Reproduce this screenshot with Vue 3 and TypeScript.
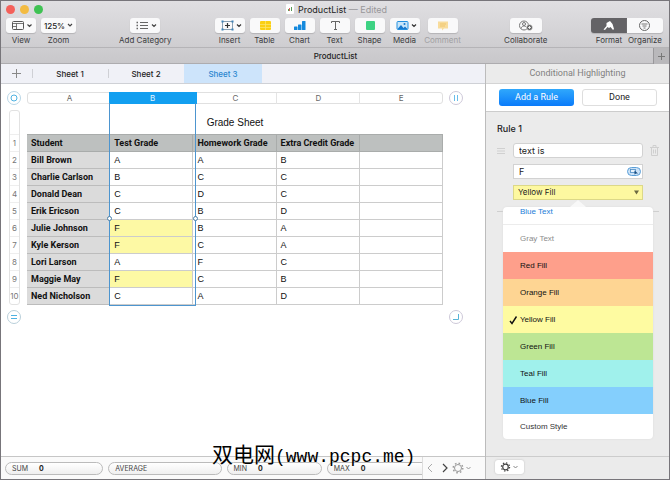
<script setup lang="ts">
import { ref } from 'vue'

interface Fill { name: string; tone: string }

const columns: string[] = ['A', 'B', 'C', 'D', 'E']
const headings: string[] = ['Student', 'Test Grade', 'Homework Grade', 'Extra Credit Grade', '']
const students: string[][] = [
  ['Bill Brown', 'A', 'A', 'B', ''],
  ['Charlie Carlson', 'B', 'C', 'C', ''],
  ['Donald Dean', 'C', 'D', 'C', ''],
  ['Erik Ericson', 'C', 'B', 'D', ''],
  ['Julie Johnson', 'F', 'B', 'A', ''],
  ['Kyle Kerson', 'F', 'C', 'A', ''],
  ['Lori Larson', 'A', 'F', 'C', ''],
  ['Maggie May', 'F', 'C', 'B', ''],
  ['Ned Nicholson', 'C', 'A', 'D', ''],
]
const sheets: string[] = ['Sheet 1', 'Sheet 2', 'Sheet 3']
const activeSheet = ref('Sheet 3')
const fills: Fill[] = [
  { name: 'Blue Text', tone: 'blue-text' },
  { name: 'Gray Text', tone: 'gray-text' },
  { name: 'Red Fill', tone: 'red' },
  { name: 'Orange Fill', tone: 'orange' },
  { name: 'Yellow Fill', tone: 'yellow' },
  { name: 'Green Fill', tone: 'green' },
  { name: 'Teal Fill', tone: 'teal' },
  { name: 'Blue Fill', tone: 'blue' },
  { name: 'Custom Style', tone: 'custom' },
]
const chosen = ref('Yellow Fill')
const condition = ref('text is')
const match = ref('F')
</script>

<template>
  <div class="window">
    <header class="top">
      <div class="title-row">
        <div class="lights">
          <button class="light close" aria-label="Close"></button>
          <button class="light mini" aria-label="Minimize"></button>
          <button class="light full" aria-label="Full screen"></button>
        </div>
        <h1 class="title">
          <svg width="8" height="10" viewBox="0 0 8 10"><rect width="8" height="10" rx="1" fill="#fff" /><rect x="2" y="5" width="1" height="2" fill="#5a5" /><rect x="3" y="4" width="1" height="3" fill="#d66" /><rect x="5" y="3" width="1" height="4" fill="#595" /></svg>
          <span>ProductList <span class="edited">— Edited</span></span>
        </h1>
      </div>

      <nav class="toolbar">
        <div class="group first">
          <button class="tool">
            <span class="face">
              <svg width="30" height="15" viewBox="0 0 30 15" fill="none" stroke="#555"><rect x="6.500" y="3.500" width="11" height="8" rx="1" /><path d="M6.500 5.500h11M10.500 5.500v6M6.500 8.500h4" stroke-width=".8" /><path d="M21.500 6.500l2 2 2-2" stroke="#444" stroke-width="1.200" /></svg>
            </span>
            <span class="label">View</span>
          </button>
          <button class="tool zoom">
            <span class="face"><span>125%</span><svg width="6" height="5" viewBox="0 0 6 5" fill="none" stroke="#444" stroke-width="1.200"><path d="M1 1l2 2 2-2" /></svg></span>
            <span class="label">Zoom</span>
          </button>
        </div>
        <button class="tool category">
          <span class="face">
            <svg width="30" height="15" viewBox="0 0 30 15" fill="none" stroke="#666"><path d="M10 4.500h8M10 7.500h8M10 10.500h8" /><path d="M6.500 4.500h1.500M6.500 7.500h1.500M6.500 10.500h1.500" stroke-width="1.300" /><path d="M22 6.500l2 2 2-2" stroke="#444" stroke-width="1.200" /></svg>
          </span>
          <span class="label">Add Category</span>
        </button>
        <div class="group">
          <button class="tool">
            <span class="face">
              <svg width="30" height="15" viewBox="0 0 30 15" fill="none"><rect x="7.500" y="3.500" width="10" height="8" stroke="#8aa0b4" /><path d="M12.500 5v5M10 7.500h5" stroke="#333" stroke-width="1.200" /><path d="M6.500 2.500h2v2h-2zM16.500 2.500h2v2h-2zM6.500 10.500h2v2h-2zM16.500 10.500h2v2h-2z" fill="#3f83b8" /><path d="M22 6.500l2 2 2-2" stroke="#333" stroke-width="1.200" /></svg>
            </span>
            <span class="label">Insert</span>
          </button>
          <button class="tool">
            <span class="face">
              <svg width="30" height="15" viewBox="0 0 30 15"><rect x="10" y="3" width="11" height="9" rx="1" fill="#fbcf12" /><path d="M10 6.500h11M10 9.500h11M15.500 3v9" stroke="#fde46a" fill="none" stroke-width=".8" /></svg>
            </span>
            <span class="label">Table</span>
          </button>
          <button class="tool">
            <span class="face">
              <svg width="30" height="15" viewBox="0 0 30 15" fill="#1489dd"><rect x="9" y="8.500" width="3.500" height="3.500" rx=".5" /><rect x="13" y="6.500" width="3.500" height="5.500" rx=".5" /><rect x="17" y="3" width="3.500" height="9" rx=".5" /></svg>
            </span>
            <span class="label">Chart</span>
          </button>
          <button class="tool">
            <span class="face">
              <svg width="30" height="15" viewBox="0 0 30 15" fill="none" stroke="#666"><path d="M11.500 5V3.500h8V5M15.500 3.500v8M14 11.500h3" /></svg>
            </span>
            <span class="label">Text</span>
          </button>
          <button class="tool">
            <span class="face">
              <svg width="30" height="15" viewBox="0 0 30 15"><rect x="11" y="3" width="9" height="9" rx="1" fill="#3dd283" /></svg>
            </span>
            <span class="label">Shape</span>
          </button>
          <button class="tool">
            <span class="face">
              <svg width="30" height="15" viewBox="0 0 30 15"><rect x="7" y="3.500" width="11" height="8" rx="1" fill="#c8e6fa" stroke="#2490df" /><path d="M7.500 11l3.500-4 2.500 3 1.500-1.500 2.500 2.500z" fill="#1679cf" /><circle cx="14.500" cy="6" r="1" fill="#1679cf" /><path d="M22 6.500l2 2 2-2" fill="none" stroke="#333" stroke-width="1.200" /></svg>
            </span>
            <span class="label">Media</span>
          </button>
          <button class="tool comment" disabled>
            <span class="face">
              <svg width="30" height="15" viewBox="0 0 30 15"><path d="M10 3.500h10v7h-4l-2 2v-2h-4z" fill="#f8dc9c" /><path d="M12 6h6M12 8h5" stroke="#efc66f" fill="none" /></svg>
            </span>
            <span class="label">Comment</span>
          </button>
        </div>
        <button class="tool collaborate">
          <span class="face">
            <svg width="32" height="15" viewBox="0 0 32 15" fill="none" stroke="#777"><circle cx="14" cy="7.500" r="4.500" /><circle cx="14" cy="6" r="1.500" /><path d="M11 10.500c.5-2 2-2.500 3-2.500s2 .5 2.500 1.500" /><circle cx="19.500" cy="9.500" r="3" fill="#666" stroke="#fff" stroke-width=".5" /><path d="M19.500 8v3M18 9.500h3" stroke="#fff" stroke-width=".8" /></svg>
          </span>
          <span class="label">Collaborate</span>
        </button>
        <div class="group segmented">
          <button class="tool on">
            <span class="face">
              <svg width="36" height="15" viewBox="0 0 36 15"><path d="M15.500 5l3.500-2 2.500 3 1.500 5-1 1-2.500-3-1.500 1-1.500-1-2.500 3-1.500-.5 3-3.500z" fill="#fff" /></svg>
            </span>
            <span class="label">Format</span>
          </button>
          <button class="tool">
            <span class="face">
              <svg width="36" height="15" viewBox="0 0 36 15" fill="none" stroke="#666"><circle cx="17.500" cy="7.500" r="5" /><path d="M14.500 6h6M15.500 8h4M16.500 10h2" stroke-width=".9" /></svg>
            </span>
            <span class="label">Organize</span>
          </button>
        </div>
      </nav>

      <div class="doc-tabs">
        <span class="doc-name">ProductList</span>
        <button class="doc-add" aria-label="New tab"><svg width="9" height="9" viewBox="0 0 9 9"><path d="M4.500 1v7M1 4.500h7" stroke="#777" /></svg></button>
      </div>
    </header>

    <main class="work">
      <section class="document">
        <div class="sheet-tabs">
          <button class="sheet-add" aria-label="Add sheet"><svg width="9" height="9" viewBox="0 0 9 9"><path d="M4.500 0v9M0 4.500h9" stroke="#888" /></svg></button>
          <button v-for="s in sheets" :key="s" class="sheet-tab" :class="{ active: s === activeSheet }" @click="activeSheet = s">{{ s }}</button>
        </div>

        <div class="canvas">
          <button class="knob" aria-label="Select table"><svg width="14" height="14" viewBox="0 0 14 14" fill="none"><circle cx="7" cy="7" r="6.500" stroke="#b9d6e6" /><circle cx="7" cy="7" r="3" stroke="#4db2e2" /></svg></button>
          <div class="col-heads">
            <span v-for="c in columns" :key="c">{{ c }}</span>
            <div class="selected-head"></div>
          </div>
          <button class="knob" aria-label="Add column"><svg width="14" height="14" viewBox="0 0 14 14" fill="none"><circle cx="7" cy="7" r="6.500" stroke="#cdc8d8" /><path d="M5.500 4v6M8.500 4v6" stroke="#69bdea" /></svg></button>

          <div class="row-heads">
            <span class="blank"></span>
            <span v-for="n in 10" :key="n">{{ n }}</span>
          </div>
          <div class="table-box">
            <table class="grades">
              <caption>Grade Sheet</caption>
              <thead>
                <tr><th v-for="(h, i) in headings" :key="i" scope="col">{{ h }}</th></tr>
              </thead>
              <tbody>
                <tr v-for="row in students" :key="row[0]">
                  <th scope="row">{{ row[0] }}</th>
                  <td v-for="(g, i) in row.slice(1)" :key="i" :class="{ failed: i === 0 && g === 'F' }">{{ g }}</td>
                </tr>
              </tbody>
            </table>
            <div class="selection"><i class="grip left"></i><i class="grip right"></i></div>
          </div>
          <span></span>

          <button class="knob" aria-label="Add row"><svg width="14" height="14" viewBox="0 0 14 14" fill="none"><circle cx="7" cy="7" r="6.500" stroke="#b9cfda" /><path d="M4 5.500h6M4 8.500h6" stroke="#4db2e2" /></svg></button>
          <span></span>
          <button class="knob" aria-label="Resize table"><svg width="14" height="14" viewBox="0 0 14 14" fill="none"><circle cx="7" cy="7" r="6.500" stroke="#cdc8d8" /><path d="M9.500 4v5.500H4" stroke="#58b4d8" /></svg></button>
        </div>

        <footer class="summary">
          <div class="pills">
            <span class="pill">SUM<b>0</b></span>
            <span class="pill average">AVERAGE</span>
            <span class="pill">MIN<b>0</b></span>
            <span class="pill cut">MAX<b>0</b></span>
          </div>
          <div class="pager">
            <button aria-label="Previous"><svg width="6" height="10" viewBox="0 0 6 10" fill="none" stroke="#aaa"><path d="M5 1L1 5l4 4" /></svg></button>
            <button aria-label="Next"><svg width="6" height="10" viewBox="0 0 6 10" fill="none" stroke="#444" stroke-width="1.200"><path d="M1 1l4 4-4 4" /></svg></button>
            <button aria-label="Summary options">
              <svg width="20" height="12" viewBox="0 0 20 12" fill="none" stroke="#999"><circle cx="6" cy="6" r="3.500" /><circle cx="6" cy="6" r="4.800" stroke-width="1.400" stroke-dasharray="1.600 2.170" /><path d="M14.500 5l2 2 2-2" /></svg>
            </button>
          </div>
        </footer>
      </section>

      <aside class="inspector">
        <h2 class="panel-title">Conditional Highlighting</h2>
        <div class="actions">
          <button class="primary">Add a Rule</button>
          <button class="plain">Done</button>
        </div>
        <form class="rule" @submit.prevent>
          <h3>Rule 1</h3>
          <div class="fields">
            <svg class="handle" width="9" height="14" viewBox="0 0 9 14"><path d="M0 4.500h8M0 7h8M0 9.500h8" stroke="#d0d0d0" /></svg>
            <select v-model="condition" aria-label="Condition"><option>text is</option><option>text is not</option></select>
            <button class="trash" type="button" aria-label="Delete rule"><svg width="9" height="11" viewBox="0 0 9 11" fill="none" stroke="#cfcfcf"><path d="M0 2.500h9M3 2V.5h3V2M1.500 3v7.500h6V3M3.500 4.500v4M5.500 4.500v4" /></svg></button>

            <div class="value">
              <input v-model="match" type="text" aria-label="Text to match" />
              <button type="button" aria-label="Cell reference"><svg width="14" height="9" viewBox="0 0 14 9"><rect x=".5" y=".5" width="13" height="8" rx="4" fill="#cbe2f7" stroke="#5b9fd8" /><rect x="3.500" y="2.500" width="5" height="3" fill="#e8f3fc" stroke="#4d8cc4" stroke-width=".8" /><path d="M7.500 3.500l3.500 3h-2l-1.500 1z" fill="#174d80" /></svg></button>
            </div>
            <div class="value">
              <select v-model="chosen" class="style-select" aria-label="Highlight style"><option v-for="f in fills" :key="f.name">{{ f.name }}</option></select>
              <svg class="arrow" width="5" height="5" viewBox="0 0 5 5"><path d="M0 .5h5l-2.500 4z" fill="#6b6940" /></svg>
            </div>
          </div>
          <div class="popover-slot">
            <div class="menu" role="listbox" aria-label="Highlight styles">
              <button v-for="f in fills" :key="f.name" type="button" role="option" class="item" :class="f.tone" :aria-selected="f.name === chosen" @click="chosen = f.name">
                <svg v-if="f.name === chosen" class="tick" width="9" height="10" viewBox="0 0 9 10"><path d="M1 6l2 2.500L7.500 1.500" fill="none" stroke="#111" stroke-width="1.400" /></svg>
                <span>{{ f.name }}</span>
              </button>
            </div>
          </div>
        </form>
        <footer class="panel-foot">
          <button aria-label="Rule options">
            <svg width="29" height="14" viewBox="0 0 29 14" fill="none" stroke="#444"><circle cx="10.500" cy="7" r="2.800" stroke-width="1.200" /><circle cx="10.500" cy="7" r="4.100" stroke-width="1.200" stroke-dasharray="1.400 1.820" /><path d="M18.500 6l2 2 2-2" stroke="#888" /></svg>
          </button>
        </footer>
      </aside>
    </main>

    <div class="watermark">双电网<span>(www.pcpc.me)</span></div>
  </div>
</template>

<style>
body { background: #fff; }
</style>

<style scoped>
* { box-sizing: border-box; }
button, input, select {
  margin: 0;
  padding: 0;
  border: 0;
  background: none;
  font: inherit;
  color: inherit;
  appearance: none;
}
svg { display: block; flex: none; }
.window {
  position: relative;
  display: flex;
  flex-direction: column;
  min-height: 100vh;
  border: 1px solid #77757a;
  font-family: Inter, "Liberation Sans", sans-serif;
  font-size: 8px;
  color: #222;
}
.top { background: linear-gradient(#e0dfe2, #c8c7ca); }
.title-row {
  display: grid;
  grid-template-columns: 1fr auto 1fr;
  align-items: center;
  height: 16px;
  padding: 0 2px 0 5px;
}
.lights { display: flex; gap: 5px; }
.light { width: 9px; height: 9px; border-radius: 50%; }
.close { background: #f4605a; }
.mini { background: #f3bb42; }
.full { background: #3fc253; }
.title {
  display: flex;
  align-items: center;
  gap: 4px;
  margin: 0;
  font-size: 9px;
  font-weight: 400;
}
.edited { color: #98979a; }
.toolbar {
  display: flex;
  justify-content: space-between;
  height: 30px;
  padding: 1px 6px 0 5px;
}
.group { display: flex; gap: 5px; }
.tool {
  display: flex;
  flex-direction: column;
  align-items: center;
  width: 30px;
}
.face {
  display: flex;
  align-items: center;
  justify-content: center;
  height: 15px;
  min-width: 30px;
  border-radius: 3px;
  background: #f9f9fa;
  box-shadow: 0 1px 1px #b4b3b6;
}
.label { line-height: 14px; white-space: nowrap; color: #3b3b3d; }
.zoom { width: 35px; }
.zoom .face { width: 35px; gap: 2px; font-weight: 500; }
.category { width: 48px; }
.comment { width: 36px; }
.comment .label { color: #a09fa2; }
.collaborate { width: 40px; }
.segmented { gap: 0; }
.segmented .tool { width: 36px; }
.segmented .face { width: 36px; border-radius: 0 3px 3px 0; }
.segmented .on .face { border-radius: 3px 0 0 3px; background: #646366; }
.doc-tabs {
  display: grid;
  grid-template-columns: 1fr auto;
  align-items: stretch;
  height: 17px;
  border-top: 1px solid #b5b4b7;
  border-bottom: 1px solid #adacaf;
  line-height: 16px;
}
.doc-name { padding-left: 17px; text-align: center; font-weight: 500; }
.doc-add {
  display: grid;
  place-items: center;
  width: 16px;
  border-left: 1px solid #99989b;
  background: #b9b8bb;
}
.work { display: flex; flex: 1; }
.document { display: flex; flex-direction: column; flex: 1; min-width: 0; background: #fff; }
.sheet-tabs {
  display: flex;
  height: 20px;
  border-bottom: 1px solid #cfd1d6;
  background: #f0f1f7;
}
.sheet-add { display: grid; place-items: center; width: 31px; }
.sheet-tab { width: 76px; font-weight: 500; }
.sheet-tab:not(.active) { background: linear-gradient(#cfd0d5, #cfd0d5) left center / 1px 9px no-repeat; }
.sheet-tab.active { width: 78px; background: #cde4fb; color: #2b86cf; }
.canvas {
  display: grid;
  grid-template-columns: 14px 1fr 14px;
  grid-template-rows: 14px auto 14px;
  gap: 5px 6px;
  padding: 7px 22px 0 6px;
  flex: 1;
  align-content: start;
}
.knob { width: 14px; height: 14px; }
.col-heads {
  position: relative;
  display: grid;
  grid-template-columns: repeat(5, 1fr);
  height: 12px;
  margin-top: 1px;
  border: 1px solid #e0e0e0;
  border-radius: 3px;
  line-height: 11px;
  text-align: center;
  color: #666;
}
.col-heads span + span { border-left: 1px solid #e4e4e4; }
.col-heads span:nth-child(2) { z-index: 1; border-color: transparent; color: #e4f5ff; }
.selected-head {
  position: absolute;
  top: -1px;
  left: calc(20% - 2px);
  width: calc(20% + 5px);
  height: 12px;
  background: #129ff0;
}
.row-heads {
  display: flex;
  flex-direction: column;
  margin: 0 1px 0 2px;
  border: 1px solid #e2e2e2;
  border-radius: 3px;
  text-align: center;
  color: #777;
}
.row-heads span { height: 17px; line-height: 16px; border-top: 1px solid #eee; }
.row-heads .blank { height: 23px; border: 0; }
.table-box { position: relative; }
.grades {
  width: 100%;
  table-layout: fixed;
  border-collapse: separate;
  border-spacing: 0;
  font-family: "Liberation Sans", Arial, sans-serif;
  font-size: 9px;
  color: #111;
}
.grades caption { height: 24px; line-height: 25px; font-size: 10px; }
.grades th, .grades td {
  height: 17px;
  padding: 0 0 0 4px;
  border: solid #ccc;
  border-width: 0 1px 1px 0;
  line-height: 16px;
  text-align: left;
  white-space: nowrap;
}
.grades th { font-family: Roboto, "Liberation Sans", sans-serif; }
.grades thead th {
  height: 18px;
  border-color: #a9acab;
  border-top-width: 1px;
  background: #bdc0bf;
}
.grades tbody th { border-color: #bcbcbc; background: #dbdbdb; }
.grades td.failed { background: #fdf9a4; }
.selection {
  position: absolute;
  top: -7px;
  bottom: -1px;
  left: calc(20% - 1px);
  width: calc(20% + 4px);
  border: 1px solid #4d95cf;
  border-top: 0;
}
.grip {
  position: absolute;
  bottom: 84px;
  width: 5px;
  height: 5px;
  border: 1px solid #4a7fa8;
  border-radius: 50%;
  background: #fff;
}
.left { left: -3px; }
.right { right: -3px; }
.summary {
  display: flex;
  height: 23px;
  border-top: 1px solid #c6c6c6;
  background: #fafafa;
}
.pills {
  display: grid;
  grid-template-columns: 98fr 113fr 95fr 95fr;
  gap: 5px;
  flex: 1;
  align-items: center;
  padding-left: 4px;
}
.pill {
  display: flex;
  gap: 11px;
  height: 13px;
  padding-left: 6px;
  border: 1px solid #bbb;
  border-radius: 7px;
  background: linear-gradient(#fff, #efefef);
  font-size: 7px;
  line-height: 11px;
  color: #444;
}
.pill b { color: #222; }
.pill.cut { border-right: 0; border-radius: 7px 0 0 7px; }
.pager {
  display: flex;
  align-items: center;
  gap: 9px;
  width: 63px;
  padding-left: 4px;
  border-left: 1px solid #ddd;
}
.pager button + button + button { margin-left: -5px; }
.inspector {
  display: flex;
  flex-direction: column;
  width: 184px;
  border-left: 1px solid #bcbcbc;
  background: #ebebeb;
}
.panel-title {
  height: 20px;
  margin: 0;
  border-bottom: 1px solid #d4d4d4;
  font-family: Roboto, sans-serif;
  font-size: 9px;
  font-weight: 400;
  line-height: 19px;
  text-align: center;
  color: #808080;
}
.actions {
  display: grid;
  grid-template-columns: 1fr 1fr;
  gap: 8px;
  height: 28px;
  padding: 5px 12px 6px 13px;
  border-bottom: 1px solid #ccc;
  background: #fff;
  font-family: Roboto, sans-serif;
}
.actions button { border-radius: 3px; font-size: 9px; line-height: 15px; }
.primary { background: linear-gradient(#30a8fc, #0a7bfa); color: #fff; }
.actions .plain { border: 1px solid #dedede; background: #fff; }
.rule { flex: 1; padding-top: 9px; }
.rule h3 { margin: 0 0 6px 11px; font-size: 9px; font-weight: 500; line-height: 16px; }
.fields {
  display: grid;
  grid-template-columns: 9px 1fr 9px;
  gap: 6px 7px;
  align-items: center;
  padding: 0 10px 0 11px;
}
.fields select, .fields input {
  width: 100%;
  height: 15px;
  padding-left: 5px;
  border: 1px solid #d2d2d2;
  border-radius: 3px;
  background: #fff;
  font-size: 9px;
  line-height: 13px;
}
.value { display: grid; grid-column: 2; align-items: center; }
.value > * { grid-area: 1 / 1; }
.fields .value input { border-radius: 0; }
.value button { justify-self: end; margin-right: 2px; }
.arrow { justify-self: end; margin-right: 4px; pointer-events: none; }
.fields .style-select {
  padding-left: 4px;
  border-color: #dcd888;
  border-radius: 0;
  background: #fdf8a0;
  font-size: 8px;
}
.popover-slot {
  position: relative;
  margin: 7px 10px 0 11px;
  padding: 0 6px;
  background: linear-gradient(#cfcfcf, #cfcfcf) 0 4px / 100% 1px no-repeat;
}
.popover-slot::before {
  position: absolute;
  top: -7px;
  left: calc(50% - 8px);
  border: solid transparent;
  border-width: 0 8px 7px;
  border-bottom-color: #f8f8f8;
  content: "";
}
.menu {
  display: flex;
  flex-direction: column;
  overflow: hidden;
  border-radius: 4px;
  background: #fff;
  box-shadow: 0 0 2px #d8d8d8;
  font-family: "Liberation Sans", Arial, sans-serif;
}
.item {
  display: grid;
  align-items: center;
  height: 27px;
  padding-left: 17px;
  text-align: left;
  color: #111;
}
.item > * { grid-area: 1 / 1; }
.item.blue-text { height: 18px; padding-bottom: 12px; border-bottom: 1px solid #ececec; color: #1d7dd8; }
.gray-text { color: #8c8c8c; }
.red { background: #fe9f8b; }
.orange { background: #fed593; }
.yellow { background: #fefba1; }
.green { background: #bde694; }
.teal { background: #a0f1ec; }
.blue { background: #84cffd; }
.item.custom { height: 25px; color: #333; }
.tick { margin-left: -11px; }
.panel-foot {
  height: 23px;
  padding: 3px 9px;
  border-top: 1px solid #ccc;
}
.panel-foot button { border-radius: 3px; background: #fff; box-shadow: 0 0 2px #bbb; }
.watermark {
  position: absolute;
  bottom: 8px;
  left: 211px;
  font-family: "Noto Sans CJK SC", sans-serif;
  font-size: 21px;
  line-height: 28px;
  white-space: nowrap;
  color: #000;
}
.watermark span { font-family: "Liberation Mono", monospace; font-size: 18px; }
</style>
